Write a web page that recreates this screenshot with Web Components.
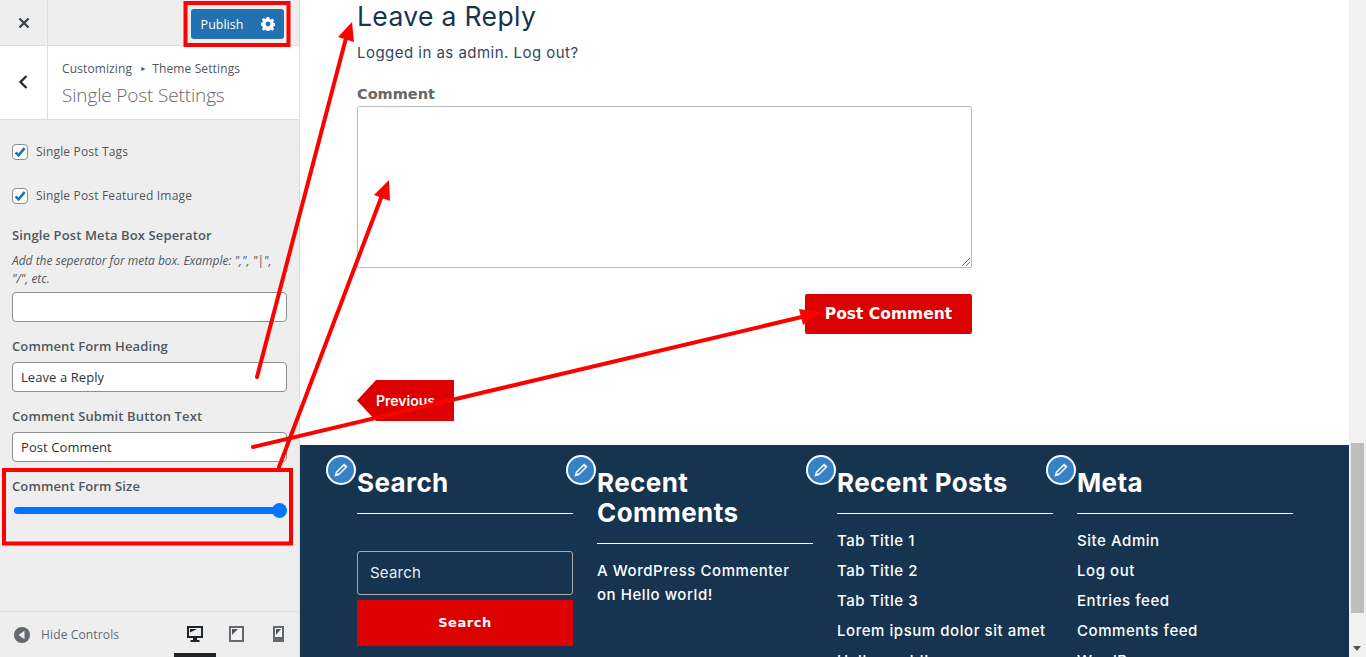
<!DOCTYPE html>
<html lang="en"><head><meta charset="utf-8"><title>Customizer</title>
<style>
html,body{margin:0;height:657px;overflow:hidden;background:#fff}
body{font-family:"Open Sans","Liberation Sans",sans-serif}
cz-app{display:grid}
</style></head><body>
<cz-app></cz-app>
<script>
function def(name, html, onInit){
  customElements.define(name, class extends HTMLElement{
    constructor(){super();this.attachShadow({mode:'open'}).innerHTML=html;}
    connectedCallback(){ if(onInit) onInit(this); }
  });
}
const MONT='"Inter","Liberation Sans",sans-serif';
const WIDE='"DejaVu Sans","Liberation Sans",sans-serif';
const SANS='"Open Sans","Liberation Sans",sans-serif';

def('cz-check',`<style>
:host{display:flex;align-items:center;gap:8px;font:12px/18px ${SANS};color:#50575e;letter-spacing:.17px;height:18px}
.b{width:14px;height:14px;border:1px solid #8c8f94;border-radius:4px;background:#fff;display:block;flex:none}
svg{display:block;width:14px;height:14px}
</style><span class="b"><svg viewBox="0 0 14 14"><path d="M2.6 7.4 5.6 10.4 11.6 3.2" fill="none" stroke="#2271b1" stroke-width="2.6"/></svg></span><span><slot></slot></span>`);

def('cz-field',`<style>
:host{display:block}
.l{font:600 13px/20px ${SANS};color:#50575e;letter-spacing:.12px}
.d{font:italic 12px/18px ${SANS};color:#50575e;margin-top:7px;margin-bottom:4px;letter-spacing:-.02px}
.i{box-sizing:border-box;height:30px;width:275px;border:1px solid #8c8f94;border-radius:4px;background:#fff;padding:0 8px;font:13px/28px ${SANS};color:#2c3338;margin-top:6px;letter-spacing:.08px}
.d:empty{display:none}
.d:not(:empty)+.i{margin-top:0}
</style><div class="l"></div><div class="d"></div><div class="i"></div>`,el=>{
  const r=el.shadowRoot;
  r.querySelector('.l').textContent=el.getAttribute('label');
  r.querySelector('.d').textContent=el.getAttribute('desc')||'';
  r.querySelector('.i').textContent=el.getAttribute('value')||'';
});

def('cz-range',`<style>
:host{display:block}
.l{font:600 13px/20px ${SANS};color:#50575e;letter-spacing:.12px}
.t{position:relative;height:7px;margin:11px 7px 0 2px;border-radius:4px;background:#0075ff;width:266px}
.k{position:absolute;right:-7px;top:-4px;width:15px;height:15px;border-radius:50%;background:#0075ff}
</style><div class="l"><slot></slot></div><div class="t"><div class="k"></div></div>`);

def('cz-top',`<style>
:host{display:flex;height:45px;border-bottom:1px solid #dcdcde;background:#eee;flex:none}
.x{width:47px;border-right:1px solid #dcdcde;display:flex;align-items:center;justify-content:center}
.sp{flex:1}
.pub{margin:9px 15px 0 0;width:93px;height:30px;background:#2271b1;border-radius:3px;display:flex;color:#fff;font:12.500px/32px ${SANS}}
.p{width:62px;height:30px;text-align:center;box-sizing:border-box;border-right:1px solid #2a6ea8;padding-left:1px}
.g{flex:1;display:flex;align-items:center;justify-content:center;padding-right:2px}
</style>
<div class="x"><svg width="14" height="14" viewBox="0 0 14 14"><path d="M2.5 2.5 11.5 11.5M11.5 2.5 2.5 11.5" stroke="#3c434a" stroke-width="2.3"/></svg></div>
<div class="sp"></div>
<div class="pub"><span class="p">Publish</span><span class="g"><svg width="14" height="14" viewBox="0 0 20 20"><path fill="#fff" d="M11.900.5l.5 2.600c.6.2 1.100.4 1.600.7l2.200-1.500 2.600 2.600-1.500 2.200c.3.5.5 1 .7 1.600l2.500.5v3.600l-2.600.5c-.2.6-.4 1.100-.7 1.600l1.500 2.200-2.600 2.600-2.200-1.500c-.5.3-1 .5-1.600.7l-.5 2.600H8.200l-.5-2.600c-.6-.2-1.100-.4-1.600-.7l-2.200 1.500-2.600-2.600 1.500-2.200c-.3-.5-.5-1-.7-1.600L-.4 12V8.400l2.500-.5c.2-.6.4-1.100.7-1.600L1.300 4.100l2.600-2.600 2.200 1.500c.5-.3 1-.5 1.600-.7l.5-2.600zM10 6.600a3.500 3.500 0 1 0 0 7 3.500 3.500 0 0 0 0-7z"/></svg></span></div>`);

def('cz-section-head',`<style>
:host{display:flex;height:73px;background:#fff;border-bottom:1px solid #dcdcde;flex:none}
.b{width:48px;border-right:1px solid #dcdcde;display:flex;align-items:center;justify-content:center;padding:0 1px 2px 0;box-sizing:border-box}
.t{padding:13px 0 0 14px}
.c{font:12px/19px ${SANS};color:#50575e;letter-spacing:.12px;display:flex;align-items:center}
.c i{font:normal 8px/19px "DejaVu Sans",sans-serif;margin:0 7px 0 9px}
.h{font:300 19px/26px ${SANS};color:#646970;margin-top:4px;letter-spacing:-.15px}
</style>
<div class="b"><svg width="12" height="16" viewBox="0 0 12 16"><path d="M9.500 2 3.500 8l6 6" fill="none" stroke="#23282d" stroke-width="2.300"/></svg></div>
<div class="t"><div class="c">Customizing<i>▸</i>Theme Settings</div><div class="h">Single Post Settings</div></div>`);

def('cz-foot',`<style>
:host{display:flex;align-items:center;height:45px;border-top:1px solid #dcdcde;background:#eee;flex:none;margin-top:auto}
.h{display:flex;align-items:center;gap:11px;padding-left:14px;font:12px ${SANS};color:#646970;letter-spacing:.14px}
.d{margin-left:auto;margin-right:-1px;display:flex;height:45px}
.d span{width:42px;display:flex;align-items:center;justify-content:center;box-sizing:border-box;padding:0 2px 2px 0}
.d span.a{border-bottom:4px solid #1d2327;padding:2px 0 0}
</style>
<div class="h"><svg width="16" height="16" viewBox="0 0 16 16"><circle cx="8" cy="8" r="8" fill="#646970"/><path d="M10.500 3.800v8.400L4.600 8z" fill="#eee"/></svg>Hide Controls</div>
<div class="d">
<span class="a"><svg width="16" height="16" viewBox="0 0 16 16"><path fill="#1d2327" d="M0 0h16v12H10v2h2.500v2h-9v-2H6v-2H0zM2 2v8h12V2zM3 3h7L3 6.500z"/></svg></span>
<span><svg width="15" height="16" viewBox="0 0 15 16"><rect width="15" height="16" fill="#646970"/><rect x="2" y="2" width="11" height="12" fill="#f4f4f4"/><path fill="#50575e" d="M3 3h6L3 9z"/></svg></span>
<span><svg width="11" height="16" viewBox="0 0 11 16"><path fill="#646970" d="M0 0h11v16H0zM2 2v9h7V2z"/><path fill="#f4f4f4" d="M2 2h7v9H2z"/><path fill="#50575e" d="M3 3h5L3 9z"/></svg></span>
</div>`);

def('cz-sidebar',`<style>
:host{display:flex;flex-direction:column;width:300px;height:657px;background:#eee;box-sizing:border-box;border-right:1px solid #dcdcde}
.c{padding:23px 12px 0 12px;display:flex;flex-direction:column}
cz-check+cz-check{margin-top:26px}
</style>
<cz-top></cz-top><cz-section-head></cz-section-head>
<div class="c">
<cz-check>Single Post Tags</cz-check>
<cz-check>Single Post Featured Image</cz-check>
<cz-field style="margin-top:20px" label="Single Post Meta Box Seperator" desc='Add the seperator for meta box. Example: ",", "|", "/", etc.'></cz-field>
<cz-field style="margin-top:14px" label="Comment Form Heading" value="Leave a Reply"></cz-field>
<cz-field style="margin-top:14px" label="Comment Submit Button Text" value="Post Comment"></cz-field>
<cz-range style="margin-top:14px">Comment Form Size</cz-range>
</div>
<cz-foot></cz-foot>`);

def('reply-form',`<style>
:host{display:block;width:615px;margin-left:57px;font-family:${MONT};color:#163450}
h2{margin:0;font:400 26.500px/32px ${MONT};letter-spacing:.35px;height:32px}
p{margin:10px 0 0;font:400 15px/22px ${MONT};color:#33475f;letter-spacing:.47px}
label{display:block;font:700 14.500px/20px ${WIDE};color:#666;margin-top:20px}
.ta{box-sizing:border-box;height:162px;border:1px solid #bbb;border-radius:2px;margin-top:2px;background:#fff;position:relative}
.ta svg{position:absolute;right:0;bottom:0}
.row{display:flex;justify-content:flex-end;margin-top:26px}
.btn{width:167px;height:40px;background:#dd0000;border-radius:2px;color:#fff;font:700 15.500px/40px ${WIDE};text-align:center}
.prev{margin-top:46px;width:97px;height:41px;background:#dd0000;clip-path:polygon(19px 0,100% 0,100% 100%,19px 100%,0 50%);color:#fff;font:600 14px/41px ${MONT};padding-left:19px;box-sizing:border-box}
</style>
<h2>Leave a Reply</h2>
<p>Logged in as admin. Log out?</p>
<label>Comment</label>
<div class="ta"><svg width="11" height="11" viewBox="0 0 11 11"><path d="M10 2 2 10M10 6 6 10" stroke="#777" stroke-width="1"/></svg></div>
<div class="row"><div class="btn">Post Comment</div></div>
<div class="prev">Previous</div>`);

def('edit-pencil',`<style>
:host{position:absolute;left:-31px;top:-13px;width:26px;height:26px;border:2px solid #fff;border-radius:50%;background:#3582c4;display:flex;align-items:center;justify-content:center}
</style><svg width="16" height="16" viewBox="0 0 16 16"><path fill="#fff" d="M11.200 1.500 14.500 4.800 6 13.300 1.500 14.500 2.700 10zM10.800 3.900 4 10.700 5.300 12 12.100 5.200z"/></svg>`);

def('foot-widget',`<style>
:host{display:block;position:relative;width:216px;color:#fff;font-family:${MONT}}
h3{margin:0;font:700 26px/30px ${MONT};letter-spacing:.4px;padding-bottom:15px;border-bottom:1px solid #fff}
.b{font:500 15px/30px ${MONT};letter-spacing:.55px}
</style><edit-pencil></edit-pencil><h3></h3><div class="b"><slot></slot></div>`,el=>{
  el.shadowRoot.querySelector('h3').innerHTML=el.getAttribute('heading');
});

def('foot-search',`<style>
:host{display:block;padding-top:37px}
.i{box-sizing:border-box;height:44px;border:1px solid #aaa;border-radius:3px;padding:0 12px;font:400 15px/42px ${MONT};letter-spacing:.2px;color:#e8eef3}
.b{margin-top:5px;height:46px;background:#dd0000;font:700 13px/46px ${WIDE};text-align:center;color:#fff}
</style><div class="i">Search</div><div class="b">Search</div>`);

def('foot-list',`<style>
:host{display:block;padding-top:12px}
</style><slot></slot>`);

def('site-footer',`<style>
:host{display:flex;gap:24px;height:212px;background:#163450;box-sizing:border-box;padding:23px 0 0 57px;overflow:hidden}
</style><slot></slot>`);

def('preview-pane',`<style>
:host{display:flex;flex-direction:column;height:657px;overflow:hidden;background:#fff;min-width:0}
.m{height:445px;flex:none;overflow:hidden}
</style><div class="m"><reply-form></reply-form></div>
<site-footer>
<foot-widget heading="Search"><foot-search></foot-search></foot-widget>
<foot-widget heading="Recent<br>Comments"><div style="padding-top:15px;line-height:24px">A WordPress Commenter<br>on Hello world!</div></foot-widget>
<foot-widget heading="Recent Posts"><foot-list><div>Tab Title 1</div><div>Tab Title 2</div><div>Tab Title 3</div><div>Lorem ipsum dolor sit amet</div><div>Hello world!</div></foot-list></foot-widget>
<foot-widget heading="Meta"><foot-list><div>Site Admin</div><div>Log out</div><div>Entries feed</div><div>Comments feed</div><div>WordPress.org</div></foot-list></foot-widget>
</site-footer>`);

def('scroll-bar',`<style>
:host{display:block;width:17px;height:657px;background:#f1f1f1;position:relative}
.t{position:absolute;left:2px;top:443px;width:13px;height:170px;background:#bdbdbd}
.a{position:absolute;left:4px;top:646px;width:0;height:0;border-left:4.500px solid transparent;border-right:4.500px solid transparent;border-top:5px solid #505050}
</style><div class="t"></div><div class="a"></div>`);

def('note-overlay',`<style>
:host{position:absolute;left:0;top:0;width:1366px;height:657px;pointer-events:none;display:block}
svg{display:block}
</style><svg width="1366" height="657" viewBox="0 0 1366 657">
<g fill="none" stroke="#ff0000" stroke-width="4">
<rect x="185.500" y="3" width="103" height="42"/>
<rect x="4" y="470" width="287" height="73.500"/>
</g>
<g stroke="#ff0000" stroke-width="4" stroke-linecap="round" fill="#ff0000">
<line x1="257" y1="377" x2="346" y2="38"/>
<line x1="279" y1="467" x2="381" y2="198"/>
<line x1="253" y1="447" x2="806" y2="316"/>
</g>
<g fill="#ff0000">
<polygon points="352,22 338,37 354,42"/>
<polygon points="389,180 374,195 390,201"/>
<polygon points="821,312 799,309 803,325"/>
</g></svg>`);

def('cz-app',`<style>
:host{display:grid;grid-template-columns:300px 1049px 17px;height:657px;position:relative;overflow:hidden}
</style><cz-sidebar></cz-sidebar><preview-pane></preview-pane><scroll-bar></scroll-bar><note-overlay></note-overlay>`);
</script>
</body></html>
